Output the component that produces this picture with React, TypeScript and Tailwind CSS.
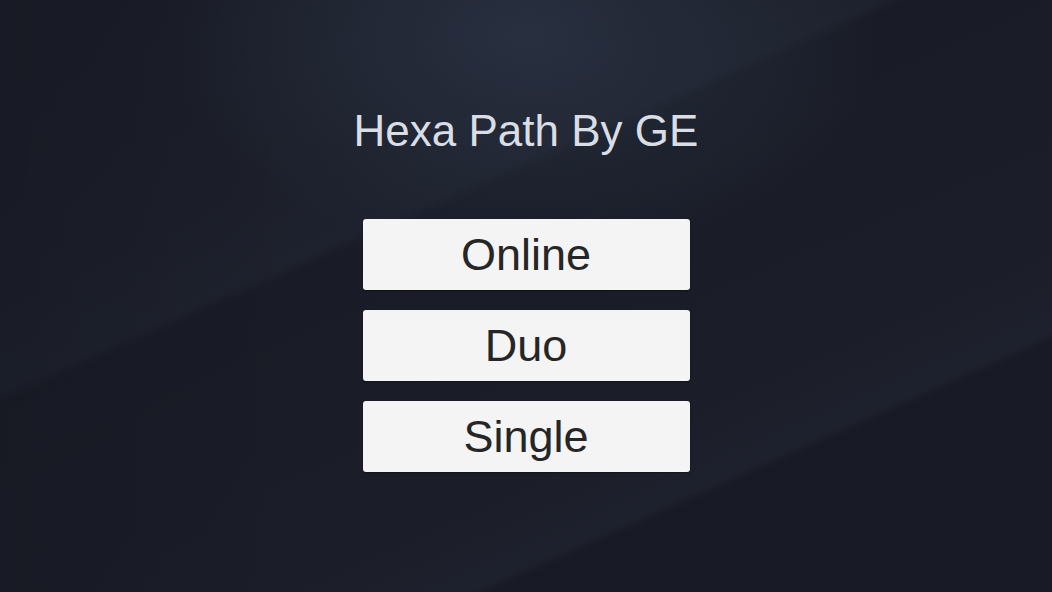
import React from 'react'

const modes = ['Online', 'Duo', 'Single']

const App = () => {
  return (
    <div className="relative h-[592px] w-[1052px] overflow-hidden bg-[#1a1d28] font-['Liberation_Sans',Arial,sans-serif]">
      {/* background glow and streaks */}
      <div className="absolute inset-0 bg-[radial-gradient(ellipse_34%_38%_at_50%_6%,rgba(48,58,76,0.6)_0%,rgba(48,58,76,0)_100%),linear-gradient(156deg,rgba(255,255,255,0)_0%,rgba(120,140,170,0.02)_28%,rgba(120,140,170,0.04)_37%,rgba(0,0,0,0.04)_38.2%,rgba(0,0,0,0)_50%,rgba(120,140,170,0.01)_68%,rgba(120,140,170,0.035)_75.5%,rgba(0,0,0,0.1)_76.5%,rgba(0,0,0,0.1)_100%)]" />
      <div className="absolute inset-0 bg-[linear-gradient(90deg,rgba(0,0,0,0.1)_0%,rgba(0,0,0,0)_30%)]" />

      <div className="relative flex flex-col items-center pt-[109px]">
        <h1 className="text-[44px] leading-none font-normal text-[#d9dde5]">Hexa Path By GE</h1>

        <div className="mt-[66px] flex flex-col gap-[20px]">
          {modes.map((mode) => (
            <button
              key={mode}
              className="flex h-[71px] w-[327px] items-center justify-center rounded-[3px] bg-[#f4f4f5] text-[45px] leading-none text-[#262626] shadow-[0_1px_2px_rgba(0,0,0,0.4)]"
            >
              {mode}
            </button>
          ))}
        </div>
      </div>
    </div>
  )
}

export default App
